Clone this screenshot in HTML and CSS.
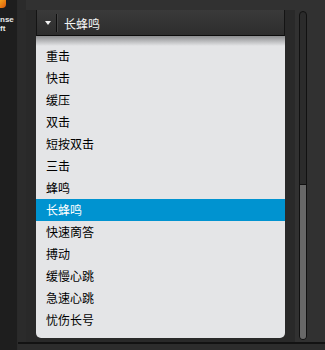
FILE: index.html
```html
<!DOCTYPE html>
<html lang="zh-CN">
<head>
    <meta charset="UTF-8">
    <title>Sound Picker</title>
    <link rel="stylesheet" href="styles.css">
</head>
<body>

<div class="app">
    <div class="sidebar">
        <div class="logo"></div>
        <div class="brand">nse<br>ft</div>
    </div>

    <div class="main">
        <div class="content">
            <div class="panel">
                <div class="dropdown">
                    <div class="select">
                        <span class="arrow"></span>
                        <span class="divider"></span>
                        <span class="value">长蜂鸣</span>
                    </div>
                    <ul class="options">
                        <li>重击</li>
                        <li>快击</li>
                        <li>缓压</li>
                        <li>双击</li>
                        <li>短按双击</li>
                        <li>三击</li>
                        <li>蜂鸣</li>
                        <li class="selected">长蜂鸣</li>
                        <li>快速啇答</li>
                        <li>搏动</li>
                        <li>缓慢心跳</li>
                        <li>急速心跳</li>
                        <li>忧伤长号</li>
                    </ul>
                </div>
            </div>
            <div class="scrollbar">
                <div class="thumb"></div>
            </div>
        </div>
        <div class="footer"></div>
    </div>
</div>

</body>
</html>
```

FILE: styles.css
```css
body {
    margin: 0;
    background-color: #323232;
    font-family: "Noto Sans CJK SC", "Noto Sans", sans-serif;
}

.app {
    display: flex;
    width: 325px;
    height: 350px;
    overflow: hidden;
}

.sidebar {
    width: 17px;
    flex-shrink: 0;
    background-color: #1e1e1e;
    border-right: 1px solid #2a2a2a;
}

.logo {
    width: 6px;
    height: 8px;
    background: linear-gradient(135deg, #f7a21b, #d9570b);
    border-radius: 0 0 4px 0;
}

.brand {
    margin-top: 7px;
    color: #e8e8e8;
    font-family: "Liberation Sans", Arial, sans-serif;
    font-size: 8px;
    font-weight: bold;
    line-height: 9px;
}

.main {
    flex: 1;
    display: flex;
    flex-direction: column;
    background-color: #313131;
}

.content {
    flex: 1;
    display: flex;
    padding-top: 10px;
    background: linear-gradient(to right, #2b2b2b 0, #2b2b2b 8px, #313131 8px);
}

.panel {
    width: 249px;
    margin-left: 8px;
    padding: 0 10px;
    background-color: #292929;
}

.dropdown {
    display: flex;
    flex-direction: column;
    height: 328px;
}

.select {
    display: flex;
    align-items: center;
    height: 24px;
    padding-top: 1px;
    background: linear-gradient(#3a3a3a, #2d2d2d);
    border-left: 1px solid #141414;
    border-right: 1px solid #141414;
    border-bottom: 1px solid #0c0c0c;
}

.arrow {
    width: 0;
    height: 0;
    margin-left: 8px;
    border-left: 3px solid transparent;
    border-right: 3px solid transparent;
    border-top: 4px solid #f2f2f2;
}

.divider {
    width: 1px;
    height: 18px;
    margin-left: 5px;
    background-color: #0e0e0e;
    border-right: 1px solid #444;
}

.value {
    margin-left: 6px;
    color: #f4f4f4;
    font-size: 12px;
}

.options {
    flex: 1;
    list-style: none;
    margin: 0;
    padding: 9px 0 0;
    background: linear-gradient(#8c8d8f 0, #e4e5e7 10px);
    border-radius: 0 0 5px 5px;
}

.options li {
    height: 22px;
    line-height: 22px;
    padding-left: 10px;
    font-size: 12px;
    color: #000;
}

.options li.selected {
    background-color: #0093d0;
    color: #fff;
}

.scrollbar {
    position: relative;
    width: 6px;
    height: 327px;
    margin-left: 4px;
    margin-top: 1px;
    background-color: #2b2b2b;
    border: 1px solid #111;
    border-radius: 4px;
}

.thumb {
    position: absolute;
    left: 0;
    right: 0;
    bottom: 0;
    height: 154px;
    background-color: #686868;
    border-top: 1px solid #111;
    border-radius: 0 0 3px 3px;
}

.footer {
    height: 6px;
    border-top: 2px solid #121212;
    background-color: #2c2c2c;
}
```
